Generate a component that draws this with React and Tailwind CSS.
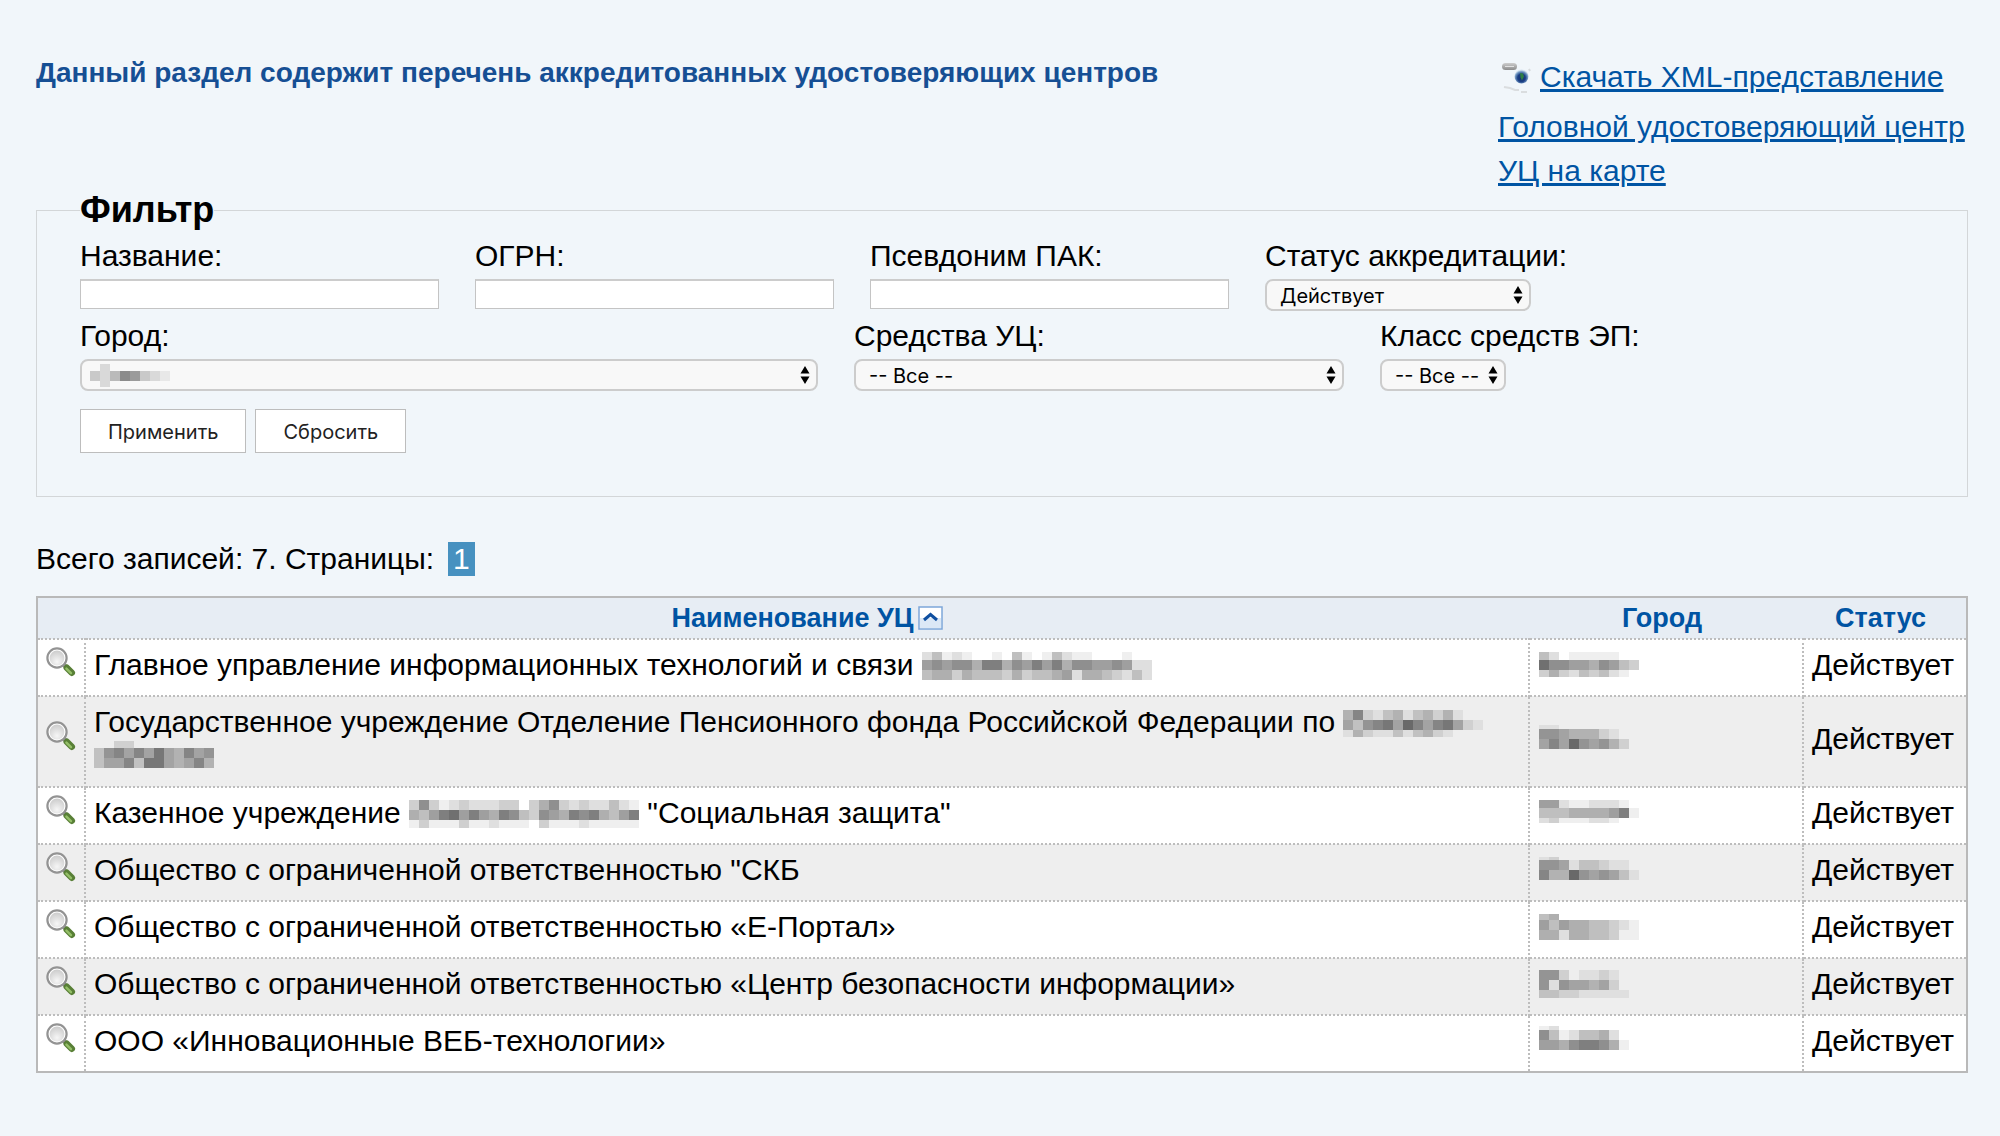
import React, { useState } from "react"

// Each digit is the darkness of one 10px block, 0 (clear) to 9
const centers = [
  {
    id: 1,
    name: [
      "Главное управление информационных технологий и связи ",
      {
        y: 2,
        heights: [8, 10, 10],
        rows: [
          "24121001041014211000100",
          "67677588576868577667622",
          "45535444353445625543242",
        ],
      },
    ],
    city: {
      y: 2,
      heights: [8, 10, 7],
      rows: ["4201111100", "9776657643", "3532434210"],
    },
    status: "Действует",
  },
  {
    id: 2,
    name: [
      "Государственное учреждение Отделение Пенсионного фонда Российской Федерации по ",
      {
        y: 3,
        heights: [10, 10, 7],
        rows: ["47213413424100", "53678597578521", "14211313421000"],
      },
      " ",
      {
        y: 0,
        heights: [7, 10, 10],
        rows: ["002200000000", "367575854756", "355738854574"],
      },
    ],
    city: {
      y: 1,
      heights: [4, 10, 10],
      rows: ["110000000", "665444210", "575965642"],
    },
    status: "Действует",
  },
  {
    id: 3,
    name: [
      "Казенное учреждение ",
      {
        y: 2,
        heights: [10, 10, 8],
        rows: [
          "37312322233035732322421",
          "54689686587437658785468",
          "13111311211103111211111",
        ],
      },
      ' "Социальная защита"',
    ],
    city: {
      y: 2,
      heights: [8, 10, 5],
      rows: ["6621122210", "4445555681", "2311122100"],
    },
    status: "Действует",
  },
  {
    id: 4,
    name: ['Общество с ограниченной ответственностью "СКБ'],
    city: {
      y: 2,
      heights: [3, 10, 10],
      rows: ["1200000000", "6651332110", "7449656531"],
    },
    status: "Действует",
  },
  {
    id: 5,
    name: ["Общество с ограниченной ответственностью «Е-Портал»"],
    city: {
      y: 2,
      heights: [6, 10, 10],
      rows: ["4500000000", "6465544321", "5525544311"],
    },
    status: "Действует",
  },
  {
    id: 6,
    name: [
      "Общество с ограниченной ответственностью «Центр безопасности информации»",
    ],
    city: {
      y: 1,
      heights: [10, 10, 8],
      rows: ["662011210", "616554520", "332211111"],
    },
    status: "Действует",
  },
  {
    id: 7,
    name: ["ООО «Инновационные ВЕБ-технологии»"],
    city: {
      y: 0,
      heights: [4, 10, 10],
      rows: ["120000000", "741244520", "665788751"],
    },
    status: "Действует",
  },
]

const selectedCity = {
  y: 4,
  heights: [7, 10, 6],
  rows: ["02000000", "32476321", "02000000"],
}

const Mosaic = ({ y, heights, rows }) => {
  const width = rows[0].length * 10
  let top = y
  const blocks = rows.map((row, i) => {
    const rowTop = top
    top += heights[i]
    return row
      .split("")
      .map((level, j) => (
        <rect
          key={`${i}-${j}`}
          x={j * 10}
          y={rowTop}
          width="10"
          height={heights[i]}
          fillOpacity={Number(level) / 16}
        />
      ))
  })
  return (
    <svg
      width={width}
      height="30"
      viewBox={`0 0 ${width} 30`}
      shapeRendering="crispEdges"
      className="inline-block align-[-5px]"
      aria-hidden="true"
    >
      {blocks}
    </svg>
  )
}

const Magnifier = () => (
  <svg width="30" height="30" viewBox="0 0 30 30" aria-hidden="true">
    <defs>
      <radialGradient id="lens" cx="0.5" cy="0.75" r="0.75">
        <stop offset="0" stopColor="#f6f6f6" />
        <stop offset="1" stopColor="#cccccc" />
      </radialGradient>
    </defs>
    <path d="M17 17l4 4" stroke="#8a8a8a" strokeWidth="4" />
    <path
      d="M20.8 20.8l5 5"
      stroke="#587f36"
      strokeWidth="6.5"
      strokeLinecap="round"
    />
    <path
      d="M20.4 21.6l4.6 4.6"
      stroke="#94bf68"
      strokeWidth="2.4"
      strokeLinecap="round"
    />
    <circle
      cx="11"
      cy="11"
      r="9.6"
      fill="#fff"
      stroke="#939393"
      strokeWidth="2.2"
    />
    <circle cx="11" cy="11" r="7.4" fill="url(#lens)" />
  </svg>
)

const XmlIcon = () => (
  <svg width="32" height="32" viewBox="0 0 32 32" aria-hidden="true">
    <defs>
      <linearGradient id="pill" x1="0" y1="0" x2="0" y2="1">
        <stop offset="0" stopColor="#cdcdcd" />
        <stop offset="1" stopColor="#8c8c8c" />
      </linearGradient>
      <radialGradient id="globe" cx="0.5" cy="0.6" r="0.55">
        <stop offset="0" stopColor="#14306f" />
        <stop offset="0.5" stopColor="#1b3f86" />
        <stop offset="0.8" stopColor="#6f96c0" />
        <stop offset="1" stopColor="#d3e2ef" />
      </radialGradient>
    </defs>
    <rect x="1" y="2" width="15" height="7" rx="3.5" fill="url(#pill)" />
    <rect x="4" y="5" width="9" height="1" fill="#e2e2e2" />
    <circle cx="20.5" cy="15.5" r="7" fill="url(#globe)" />
    <path d="M19 12l3 .5 1 3-2 4-1.500-3z" fill="#2f7f45" />
    <path d="M28 8l1 2" stroke="#d9dcde" strokeWidth="2" />
    <path
      d="M3 26l6 1 5 2h4M20 31h6"
      stroke="#dadddf"
      strokeWidth="2"
      fill="none"
    />
  </svg>
)

const SortIcon = () => (
  <svg width="25" height="24" viewBox="0 0 25 24" aria-hidden="true">
    <rect
      x="1"
      y="1"
      width="23"
      height="22"
      fill="#fff"
      stroke="#7da7d9"
      strokeWidth="1.500"
    />
    <rect x="2" y="12" width="21" height="10" fill="#dbe8f6" />
    <path
      d="M6 14l6.500-5.500L19 14"
      fill="none"
      stroke="#0f4fa0"
      strokeWidth="3"
    />
  </svg>
)

const Select = ({ id, className, children, mosaic, ...props }) => (
  <div className={`grid items-center ${className}`}>
    <select
      id={id}
      className="col-start-1 row-start-1 h-8 w-full appearance-none rounded-lg border-2 border-[#cccccc] bg-[#f8f8f8] pt-0.5 pl-[13px] pr-6 font-[Inter,sans-serif] text-[20px] leading-[26px] text-black"
      {...props}
    >
      {children}
    </select>
    {mosaic && (
      <span className="pointer-events-none col-start-1 row-start-1 flex pl-[10px]">
        <Mosaic {...mosaic} />
      </span>
    )}
    <svg
      width="10"
      height="18"
      viewBox="0 0 10 18"
      className="pointer-events-none col-start-1 row-start-1 mr-2 justify-self-end"
      aria-hidden="true"
    >
      <path d="M5 0l4.500 7.500h-9zM5 18l4.500-7.500h-9z" />
    </svg>
  </div>
)

const Field = ({ id, label, children }) => (
  <div>
    <label htmlFor={id} className="mb-[6px] block whitespace-nowrap">
      {label}
    </label>
    {children}
  </div>
)

const inputClass =
  "block h-[30px] w-[359px] border border-t-2 border-[#c4c4c4] border-t-[#cccccc] bg-white px-2 text-[20px]"
const buttonClass =
  "h-11 border border-[#bdbdbd] bg-white px-[27px] pt-0.5 font-[Inter,sans-serif] text-[20px] leading-7 text-[#222]"

const emptyFilter = {
  name: "",
  ogrn: "",
  alias: "",
  status: "active",
  city: "selected",
  tools: "all",
  signClass: "all",
}

const App = () => {
  const [filter, setFilter] = useState(emptyFilter)

  const handleChange = (e) => {
    setFilter({ ...filter, [e.target.id]: e.target.value })
  }

  return (
    <div className="min-h-screen bg-[#f1f6fa] pt-14 pr-8 pb-16 pl-9 font-['Liberation_Sans',Arial,sans-serif] text-[30px] leading-[34px] text-black">
      <header className="flex items-start justify-between">
        <h1 className="text-[28px] font-bold text-[#164f94]">
          Данный раздел содержит перечень аккредитованных удостоверяющих центров
        </h1>
        <nav className="flex w-[470px] flex-col items-start pt-1 text-[#0054a3]">
          <div className="mb-4 flex items-center gap-[7px] pl-[3px]">
            <XmlIcon />
            <a href="#xml" className="underline">
              Скачать XML-представление
            </a>
          </div>
          <a href="#root-center" className="mb-[10px] underline">
            Головной удостоверяющий центр
          </a>
          <a href="#map" className="underline">
            УЦ на карте
          </a>
        </nav>
      </header>

      <form onSubmit={(e) => e.preventDefault()}>
        <fieldset className="mt-0.5 border border-[#d3d6d8] px-[43px] pb-[43px]">
          <legend className="text-[36px] leading-10 font-bold">Фильтр</legend>
          <div className="mt-[9px] flex flex-wrap gap-x-9">
            <Field id="name" label="Название:">
              <input
                id="name"
                type="text"
                value={filter.name}
                onChange={handleChange}
                className={inputClass}
              />
            </Field>
            <Field id="ogrn" label="ОГРН:">
              <input
                id="ogrn"
                type="text"
                value={filter.ogrn}
                onChange={handleChange}
                className={inputClass}
              />
            </Field>
            <Field id="alias" label="Псевдоним ПАК:">
              <input
                id="alias"
                type="text"
                value={filter.alias}
                onChange={handleChange}
                className={inputClass}
              />
            </Field>
            <Field id="status" label="Статус аккредитации:">
              <Select
                id="status"
                value={filter.status}
                onChange={handleChange}
                className="w-[266px]"
              >
                <option value="active">Действует</option>
              </Select>
            </Field>
          </div>
          <div className="mt-2 flex flex-wrap gap-x-9">
            <Field id="city" label="Город:">
              <Select
                id="city"
                value={filter.city}
                onChange={handleChange}
                className="w-[738px]"
                mosaic={selectedCity}
              >
                <option value="selected"></option>
              </Select>
            </Field>
            <Field id="tools" label="Средства УЦ:">
              <Select
                id="tools"
                value={filter.tools}
                onChange={handleChange}
                className="w-[490px]"
              >
                <option value="all">-- Все --</option>
              </Select>
            </Field>
            <Field id="signClass" label="Класс средств ЭП:">
              <Select
                id="signClass"
                value={filter.signClass}
                onChange={handleChange}
                className="w-[126px]"
              >
                <option value="all">-- Все --</option>
              </Select>
            </Field>
          </div>
          <div className="mt-[18px] flex gap-[9px]">
            <button type="submit" className={buttonClass}>
              Применить
            </button>
            <button
              type="button"
              onClick={() => setFilter(emptyFilter)}
              className={buttonClass}
            >
              Сбросить
            </button>
          </div>
        </fieldset>
      </form>

      <div className="mt-[45px] flex">
        Всего записей: 7. Страницы:
        <span className="ml-3.5 bg-[#4791c0] px-[5px] text-white">1</span>
      </div>

      <table className="mt-5 w-full border-collapse border-2 border-[#b9b9b9] bg-white">
        <thead>
          <tr className="bg-[#e7edf4] text-[27px] text-[#0054a3]">
            <th className="w-12"></th>
            <th className="h-[42px] font-bold">
              <a href="#sort" className="flex items-center justify-center gap-1">
                Наименование УЦ
                <SortIcon />
              </a>
            </th>
            <th className="w-[274px] pr-2 font-bold">Город</th>
            <th className="w-[164px] pr-2 font-bold">Статус</th>
          </tr>
        </thead>
        <tbody>
          {centers.map((center) => (
            <tr key={center.id} className="odd:bg-white even:bg-[#eeeeee]">
              <td className="border-2 border-dotted border-[#bdbdbd] pb-3 pl-2">
                <a href="#view" aria-label="Просмотр" className="block">
                  <Magnifier />
                </a>
              </td>
              <td className="border-2 border-dotted border-[#bdbdbd] pt-2 pr-8 pb-[13px] pl-2">
                {center.name.map((part, i) =>
                  typeof part === "string" ? (
                    <React.Fragment key={i}>{part}</React.Fragment>
                  ) : (
                    <Mosaic key={i} {...part} />
                  )
                )}
              </td>
              <td className="border-2 border-dotted border-[#bdbdbd] pt-2 pb-[13px] pl-[9px]">
                <Mosaic {...center.city} />
              </td>
              <td className="border-2 border-dotted border-[#bdbdbd] pt-2 pb-[13px] pl-2">
                {center.status}
              </td>
            </tr>
          ))}
        </tbody>
      </table>
    </div>
  )
}

export default App
